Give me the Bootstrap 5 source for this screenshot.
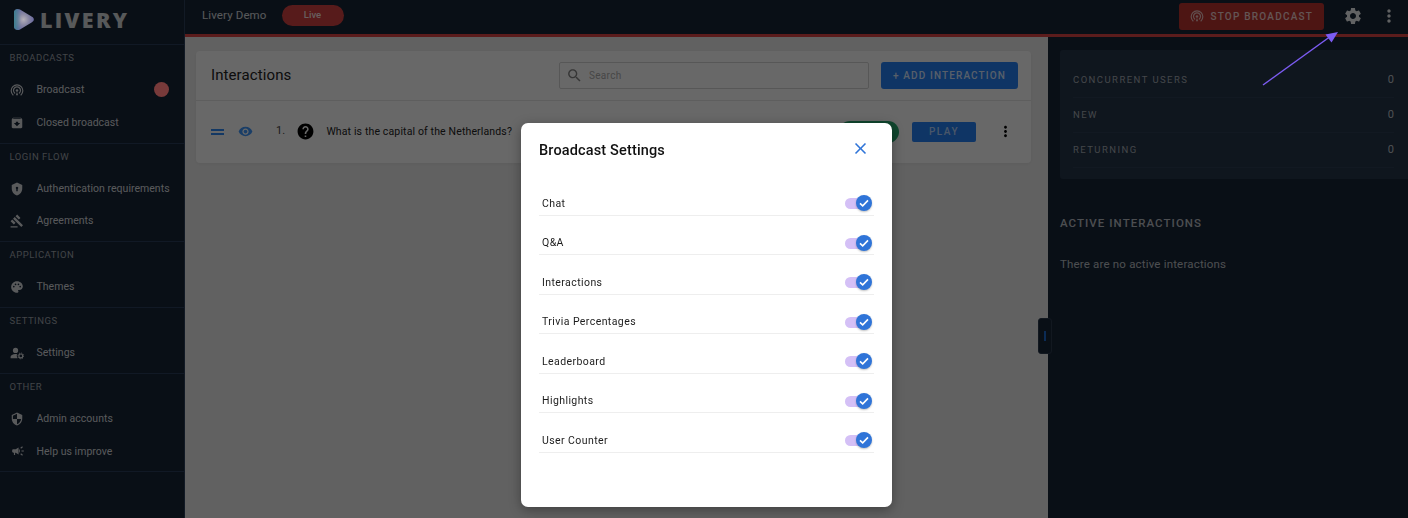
<!DOCTYPE html>
<html lang="en">
<head>
<meta charset="UTF-8">
<title>Livery</title>
<link href="https://cdn.jsdelivr.net/npm/bootstrap@5.3.0/dist/css/bootstrap.min.css" rel="stylesheet">
<style>
body{height:518px;overflow:hidden;font-family:Roboto,"Liberation Sans",sans-serif;background:#e8e8e8;color:#212121}
.ico{width:1em;height:1em;fill:currentColor;flex:none;display:block}
.side{width:185px;flex:none;background:#162436;border-right:1px solid #2b3e58;color:rgba(255,255,255,.8)}
.logo-row{height:45px;border-bottom:1px solid #2a3d5a;padding:8px 0 0 13px}
.logo-ic{position:relative;z-index:1051;margin-right:5px;flex:none}
.logo-txt{font-size:21.5px;font-weight:800;letter-spacing:2.3px;line-height:24px;color:#fff;opacity:.8;font-family:"Open Sans",Roboto,sans-serif}
.side-sec{border-bottom:1px solid #2a3d5a;padding:4px 0 3.4px}
.side-lbl{height:18px;line-height:18px;margin:0 0 6.5px 9.5px;font-size:9.5px;letter-spacing:.5px;color:rgba(255,255,255,.58)}
.side-item{height:32.85px;padding-left:10px;font-size:10.5px;letter-spacing:.02px;color:rgba(255,255,255,.82)}
.side-item .ico{font-size:14px;margin-right:12.5px}
.side-item .ico-wide{width:16px;margin-right:10.5px}
.live-dot{position:relative;z-index:1051;width:15px;height:15px;border-radius:50%;background:#783a3a;margin:0 15px 0 auto}
.topbar{height:37px;flex:none;background:#162436;border-bottom:3px solid #d84444;padding-left:17px;padding-right:9px;color:#fff;box-shadow:0 1px 0 #999}
.demo{font-size:11.5px;letter-spacing:.12px;opacity:.8;margin-top:-3px}
.live-pill{width:62px;height:21px;background:#d04240;border-radius:11px;font-size:9.5px;font-weight:500;margin:-3px 0 0 15px;color:rgba(255,255,255,.85)}
.stop-btn{width:145px;height:27px;background:#b8332f;border-radius:3px;font-size:10px;font-weight:500;letter-spacing:1.22px;color:rgba(255,255,255,.75);margin-right:19px;margin-top:-2px}
.stop-btn:hover{background:#b8332f;color:rgba(255,255,255,.75)}
.stop-btn .ico{font-size:14px;margin-right:6.5px;opacity:.9}
.top-ico{font-size:20px;margin-top:-2px;color:rgba(255,255,255,.9)}
.gear-ico{margin-right:16px}
.center{flex:1;padding:14px 17px 0 11px;background:#e8e8e8;min-width:0}
.ia-card{height:112px;background:#f8f8f8;border-radius:4px;box-shadow:0 1px 4px rgba(0,0,0,.06)}
.ia-head{height:50px;padding:0 13px 0 15px;border-bottom:1px solid #e0e0e0}
.ia-title{font-size:15px;color:#222;letter-spacing:.1px}
.ia-search{width:310px;height:27px;border:1px solid #d0d0d0;border-radius:2px;margin-right:12px;margin-left:auto;padding-left:6px;font-size:10px;color:#a8a8a8;letter-spacing:.3px}
.ia-search .ico{font-size:17px;margin-right:6px;color:#808080}
.add-btn{width:137px;height:27px;background:#247ef0;border-radius:3px;color:rgba(255,255,255,.8);font-size:10px;font-weight:500;letter-spacing:1.12px}
.ia-row{height:61px;padding-left:15px;font-size:10.5px;letter-spacing:.14px;color:#222}
.drag{width:13px;height:6px;border-top:2px solid #2f86ee;border-bottom:2px solid #2f86ee;margin-right:14px}
.eye{font-size:15px;color:#3f94f5;margin-right:23px}
.num{color:#444;font-size:11px}
.qmark{font-size:19px;color:#000;margin:0 11px 0 11px}
.green-pill{width:60px;height:22px;background:#28a66e;border-radius:11px;margin:0 13px 0 auto}
.play-btn{width:64px;height:20px;background:#247ef0;border-radius:2px;color:rgba(255,255,255,.65);font-size:10px;font-weight:500;letter-spacing:1.5px;margin-right:21px}
.row-more{font-size:17px;color:#000;margin-right:17px}
.right{width:360px;flex:none;background:#162436;padding:13px 0 0 12px;color:rgba(255,255,255,.8)}
.stats{height:129px;background:#253548;border-radius:3px 0 0 3px;padding:13px 14px 0 13px}
.stat-row{height:35px;border-bottom:1px solid #2b3c52;font-size:9.5px;letter-spacing:1.45px;color:rgba(255,255,255,.58)}
.stat-row b{font-weight:400;font-size:11px;letter-spacing:0;margin-left:auto;color:rgba(255,255,255,.7)}
.act-h{font-size:11.5px;font-weight:500;letter-spacing:1.05px;margin:36px 0 0;color:rgba(255,255,255,.7)}
.act-t{font-size:11.5px;letter-spacing:.18px;margin-top:24px;color:rgba(255,255,255,.7)}
.handle{position:absolute;left:1038px;top:318px;width:14px;height:36px;background:#162436;border:1px solid #2c3a4d;border-radius:3px;z-index:5}
.handle i{width:2.5px;height:10px;background:#1d6fdc;opacity:.9}
.modal-backdrop.show{opacity:.58;background:#000}
.modal-dialog{width:371px;max-width:371px;margin:123px 0 0 521px}
.modal-content{height:384px;border:0;border-radius:7px;box-shadow:0 3px 12px rgba(0,0,0,.35)}
.set-head{padding:3px 22px 0 18px;height:53px}
.set-title{font-size:14.5px;font-weight:500;color:#111;letter-spacing:.15px;margin:0}
.set-close{font-size:19px;color:#2f74d8;margin-top:-5px}
.set-list{padding:0 18px}
.set-row{height:39.5px;padding:17px 3px 0 3px;border-bottom:1px solid #eeeeee;font-size:10.5px;letter-spacing:.42px;color:#1c1c1c}
.tog{position:relative;width:26px;height:11px;background:#d4c0f6;border-radius:6px;margin-left:auto}
.tog span{position:absolute;right:-1px;top:-3px;width:16px;height:16px;border-radius:50%;background:#2f74d8;box-shadow:0 1px 2px rgba(0,0,0,.25)}
.tog svg{width:16px;height:16px;display:block}
.arrow{position:absolute;left:1255px;top:25px;z-index:1060;width:90px;height:70px}
</style>
</head>
<body>
<svg width="0" height="0" class="position-absolute">
  <defs>
    <radialGradient id="logo-grad" cx=".48" cy=".5" r=".62"><stop offset="0" stop-color="#b4b0b8"/><stop offset=".45" stop-color="#8584a2"/><stop offset="1" stop-color="#5f5fa0"/></radialGradient>
    <linearGradient id="logo-edge" x1="0" y1="0" x2="1" y2="0"><stop offset="0" stop-color="#3f8290"/><stop offset=".35" stop-color="#3f8290" stop-opacity="0"/></linearGradient>
  </defs>
  <symbol id="i-gear" viewBox="0 0 24 24"><path d="M19.14 12.94c.04-.3.06-.61.06-.94 0-.32-.02-.64-.07-.94l2.03-1.58c.18-.14.23-.41.12-.61l-1.92-3.32c-.12-.22-.37-.29-.59-.22l-2.39.96c-.5-.38-1.03-.7-1.62-.94l-.36-2.54c-.04-.24-.24-.41-.48-.41h-3.84c-.24 0-.43.17-.47.41l-.36 2.54c-.59.24-1.13.57-1.62.94l-2.39-.96c-.22-.08-.47 0-.59.22L2.74 8.87c-.12.21-.08.47.12.61l2.03 1.58c-.05.3-.09.63-.09.94s.02.64.07.94l-2.03 1.58c-.18.14-.23.41-.12.61l1.92 3.32c.12.22.37.29.59.22l2.39-.96c.5.38 1.03.7 1.62.94l.36 2.54c.05.24.24.41.48.41h3.84c.24 0 .44-.17.47-.41l.36-2.54c.59-.24 1.13-.56 1.62-.94l2.39.96c.22.08.47 0 .59-.22l1.92-3.32c.12-.22.07-.47-.12-.61l-2.01-1.58zM12 15.6c-1.98 0-3.6-1.62-3.6-3.6s1.62-3.6 3.6-3.6 3.6 1.62 3.6 3.6-1.62 3.6-3.6 3.6z"/></symbol>
  <symbol id="i-more" viewBox="0 0 24 24"><path d="M12 8c1.1 0 2-.9 2-2s-.9-2-2-2-2 .9-2 2 .9 2 2 2zm0 2c-1.1 0-2 .9-2 2s.9 2 2 2 2-.9 2-2-.9-2-2-2zm0 6c-1.1 0-2 .9-2 2s.9 2 2 2 2-.9 2-2-.9-2-2-2z"/></symbol>
  <symbol id="i-eye" viewBox="0 0 24 24"><path d="M12 4.5C7 4.5 2.73 7.61 1 12c1.73 4.39 6 7.5 11 7.5s9.27-3.11 11-7.5c-1.73-4.39-6-7.5-11-7.5zM12 17c-2.76 0-5-2.24-5-5s2.24-5 5-5 5 2.24 5 5-2.24 5-5 5zm0-8c-1.66 0-3 1.34-3 3s1.34 3 3 3 3-1.34 3-3-1.34-3-3-3z"/></symbol>
  <symbol id="i-help" viewBox="0 0 24 24"><path d="M12 2C6.48 2 2 6.48 2 12s4.48 10 10 10 10-4.48 10-10S17.52 2 12 2zm1 17h-2v-2h2v2zm2.07-7.75l-.9.92C13.45 12.9 13 13.5 13 15h-2v-.5c0-1.1.45-2.1 1.17-2.83l1.24-1.26c.37-.36.59-.86.59-1.41 0-1.1-.9-2-2-2s-2 .9-2 2H8c0-2.21 1.79-4 4-4s4 1.79 4 4c0 .88-.36 1.68-.93 2.25z"/></symbol>
  <symbol id="i-search" viewBox="0 0 24 24"><path d="M15.5 14h-.79l-.28-.27C15.41 12.59 16 11.11 16 9.5 16 5.91 13.09 3 9.5 3S3 5.91 3 9.5 5.91 16 9.5 16c1.61 0 3.09-.59 4.23-1.57l.27.28v.79l5 4.99L20.49 19l-4.99-5zm-6 0C7.01 14 5 11.99 5 9.5S7.01 5 9.5 5 14 7.01 14 9.5 11.99 14 9.5 14z"/></symbol>
  <symbol id="i-close" viewBox="0 0 24 24"><path d="M19 6.41L17.59 5 12 10.59 6.41 5 5 6.41 10.59 12 5 17.59 6.41 19 12 13.41 17.59 19 19 17.59 13.41 12z"/></symbol>
  <symbol id="i-air" viewBox="0 0 24 24"><path fill="none" stroke="currentColor" stroke-width="2" stroke-linecap="round" d="M5.2 20.5A10 10 0 1 1 18.8 20.5M8 17.2A6 6 0 1 1 16 17.2"/><circle cx="12" cy="13" r="2.2"/><path d="M10 21l2-6 2 6z"/></symbol>
  <symbol id="i-archive" viewBox="0 0 24 24"><path d="M20.54 5.23l-1.39-1.68C18.88 3.21 18.47 3 18 3H6c-.47 0-.88.21-1.16.55L3.46 5.23C3.17 5.57 3 6.02 3 6.5V19c0 1.1.9 2 2 2h14c1.1 0 2-.9 2-2V6.5c0-.48-.17-.93-.46-1.27zM12 17.5L6.5 12H10v-2h4v2h3.5L12 17.5zM5.12 5l.81-1h12l.94 1H5.12z"/></symbol>
  <symbol id="i-auth" viewBox="0 0 24 24"><path fill-rule="evenodd" d="M12 1L3 5v6c0 5.55 3.84 10.74 9 12 5.16-1.26 9-6.45 9-12V5l-9-4zm0 7a2.2 2.2 0 0 1 1.2 4v4h-2.4v-4A2.2 2.2 0 0 1 12 8z"/></symbol>
  <symbol id="i-gavel" viewBox="0 0 24 24"><path d="M1 21h12v2H1zM5.245 8.07l2.83-2.827 14.14 14.142-2.828 2.828zM12.317 1l5.657 5.656-2.83 2.83-5.654-5.66zM3.825 9.485l5.657 5.657-2.828 2.828-5.657-5.657z"/></symbol>
  <symbol id="i-palette" viewBox="0 0 24 24"><path d="M12 2C6.49 2 2 6.49 2 12s4.49 10 10 10c1.38 0 2.5-1.12 2.5-2.5 0-.61-.23-1.2-.64-1.67-.08-.1-.13-.21-.13-.33 0-.28.22-.5.5-.5H16c3.31 0 6-2.69 6-6 0-4.96-4.49-9-10-9zm5.5 11c-.83 0-1.5-.67-1.5-1.5s.67-1.5 1.5-1.5 1.5.67 1.5 1.5-.67 1.5-1.5 1.5zm-3-4c-.83 0-1.5-.67-1.5-1.5S13.67 6 14.5 6s1.5.67 1.5 1.5S15.33 9 14.5 9zM5 11.5c0-.83.67-1.5 1.5-1.5s1.5.67 1.5 1.5S7.33 13 6.5 13 5 12.33 5 11.5zm6-4c0 .83-.67 1.5-1.5 1.5S8 8.33 8 7.5 8.67 6 9.5 6s1.5.67 1.5 1.5z"/></symbol>
  <symbol id="i-manage" viewBox="0 0 24 24"><circle cx="9.5" cy="7.5" r="4.5"/><path d="M1 21v-2.500c0-2.600 3.600-5 8.500-5 1 0 1.700.1 2.500.3-.7 2.300-.3 5.200 1 7.200z"/><circle cx="18.500" cy="17" r="3.300" fill="none" stroke="currentColor" stroke-width="2"/><circle cx="18.500" cy="17" r="5" fill="none" stroke="currentColor" stroke-width="1.500" stroke-dasharray="2 1.930"/></symbol>
  <symbol id="i-admin" viewBox="0 0 24 24"><path d="M12 1L3 5v6c0 5.55 3.84 10.74 9 12 5.16-1.26 9-6.45 9-12V5l-9-4zm0 10.99h7c-.53 4.12-3.28 7.79-7 8.94V12H5V6.3l7-3.11v8.8z"/></symbol>
  <symbol id="i-camp" viewBox="0 0 24 24"><path d="M18 11v2h4v-2h-4zm-2 6.61c.96.71 2.21 1.65 3.2 2.39.4-.53.8-1.07 1.2-1.6-.99-.74-2.24-1.68-3.2-2.4-.4.54-.8 1.08-1.2 1.61zM20.4 5.6c-.4-.53-.8-1.07-1.2-1.6-.99.74-2.24 1.68-3.2 2.4.4.53.8 1.07 1.2 1.6.96-.72 2.21-1.65 3.2-2.4zM4 9c-1.1 0-2 .9-2 2v2c0 1.1.9 2 2 2h1v4h2v-4h1l5 3V6L8 9H4zm11.5 3c0-1.33-.58-2.53-1.5-3.35v6.69c.92-.81 1.5-2.01 1.5-3.34z"/></symbol>
  <symbol id="i-check" viewBox="0 0 16 16"><path d="M4 8.300l2.700 2.600L12 5.400" fill="none" stroke="#fff" stroke-width="1.600"/></symbol>
</svg>

<div class="d-flex" style="height:518px">
  <aside class="side">
    <div class="logo-row d-flex align-items-start">
      <svg class="logo-ic" width="22" height="23" viewBox="0 0 22 23"><path d="M1 4.500C1 1.500 4 0 7 1.500l12 7.300c2.500 1.500 2.500 4 0 5.400L7 21.500C4 23 1 21.500 1 18.500z" fill="url(#logo-grad)"/><path d="M1 4.500C1 1.500 4 0 7 1.500l12 7.300c2.500 1.500 2.500 4 0 5.400L7 21.500C4 23 1 21.500 1 18.500z" fill="url(#logo-edge)"/></svg>
      <span class="logo-txt">LIVERY</span>
    </div>
    <div class="side-sec">
      <div class="side-lbl">BROADCASTS</div>
      <div class="side-item d-flex align-items-center"><svg class="ico"><use href="#i-air"/></svg>Broadcast<span class="live-dot"></span></div>
      <div class="side-item d-flex align-items-center"><svg class="ico"><use href="#i-archive"/></svg>Closed broadcast</div>
    </div>
    <div class="side-sec">
      <div class="side-lbl">LOGIN FLOW</div>
      <div class="side-item d-flex align-items-center"><svg class="ico"><use href="#i-auth"/></svg>Authentication requirements</div>
      <div class="side-item d-flex align-items-center"><svg class="ico"><use href="#i-gavel"/></svg>Agreements</div>
    </div>
    <div class="side-sec">
      <div class="side-lbl">APPLICATION</div>
      <div class="side-item d-flex align-items-center"><svg class="ico"><use href="#i-palette"/></svg>Themes</div>
    </div>
    <div class="side-sec">
      <div class="side-lbl">SETTINGS</div>
      <div class="side-item d-flex align-items-center"><svg class="ico"><use href="#i-manage"/></svg>Settings</div>
    </div>
    <div class="side-sec">
      <div class="side-lbl">OTHER</div>
      <div class="side-item d-flex align-items-center"><svg class="ico"><use href="#i-admin"/></svg>Admin accounts</div>
      <div class="side-item d-flex align-items-center"><svg class="ico ico-wide"><use href="#i-camp"/></svg>Help us improve</div>
    </div>
  </aside>

  <div class="flex-grow-1 d-flex flex-column" style="min-width:0">
    <header class="topbar d-flex align-items-center">
      <span class="demo">Livery Demo</span>
      <span class="live-pill d-flex align-items-center justify-content-center">Live</span>
      <button class="stop-btn btn p-0 border-0 d-flex align-items-center justify-content-center ms-auto"><svg class="ico"><use href="#i-air"/></svg>STOP BROADCAST</button>
      <svg class="ico top-ico gear-ico"><use href="#i-gear"/></svg>
      <svg class="ico top-ico"><use href="#i-more"/></svg>
    </header>
    <div class="d-flex flex-grow-1">
      <main class="center">
        <div class="ia-card">
          <div class="ia-head d-flex align-items-center">
            <span class="ia-title">Interactions</span>
            <div class="ia-search d-flex align-items-center"><svg class="ico"><use href="#i-search"/></svg>Search</div>
            <button class="add-btn btn p-0 border-0">+ ADD INTERACTION</button>
          </div>
          <div class="ia-row d-flex align-items-center">
            <span class="drag"></span>
            <svg class="ico eye"><use href="#i-eye"/></svg>
            <span class="num">1.</span>
            <svg class="ico qmark"><use href="#i-help"/></svg>
            <span>What is the capital of the Netherlands?</span>
            <span class="green-pill"></span>
            <button class="play-btn btn p-0 border-0">PLAY</button>
            <svg class="ico row-more"><use href="#i-more"/></svg>
          </div>
        </div>
      </main>
      <section class="right">
        <div class="stats">
          <div class="stat-row d-flex align-items-center">CONCURRENT USERS<b>0</b></div>
          <div class="stat-row d-flex align-items-center">NEW<b>0</b></div>
          <div class="stat-row d-flex align-items-center">RETURNING<b>0</b></div>
        </div>
        <div class="act-h">ACTIVE INTERACTIONS</div>
        <div class="act-t">There are no active interactions</div>
      </section>
    </div>
  </div>
</div>
<div class="handle d-flex align-items-center justify-content-center"><i></i></div>

<div class="modal-backdrop show"></div>
<div class="modal d-block" tabindex="-1">
  <div class="modal-dialog">
    <div class="modal-content">
      <div class="set-head d-flex justify-content-between align-items-center">
        <h5 class="set-title">Broadcast Settings</h5>
        <svg class="ico set-close"><use href="#i-close"/></svg>
      </div>
      <div class="set-list" id="settings"></div>
    </div>
  </div>
</div>

<svg class="arrow" viewBox="0 0 90 70"><path d="M8 60L76 11" stroke="#7c5cf2" stroke-width="1.500" fill="none"/><path d="M83 7L70.500 9.500 76.500 17.500z" fill="#7c5cf2"/></svg>

<script src="https://cdn.jsdelivr.net/npm/bootstrap@5.3.0/dist/js/bootstrap.bundle.min.js"></script>
<script>
const settings = ['Chat', 'Q&A', 'Interactions', 'Trivia Percentages', 'Leaderboard', 'Highlights', 'User Counter'];
const list = document.getElementById('settings');
settings.forEach(name => {
    const row = document.createElement('div');
    row.className = 'set-row d-flex align-items-center';
    row.innerHTML = `<span class="set-name"></span>
        <div class="tog"><span><svg><use href="#i-check"/></svg></span></div>`;
    row.querySelector('.set-name').textContent = name;
    list.appendChild(row);
});
</script>
</body>
</html>
